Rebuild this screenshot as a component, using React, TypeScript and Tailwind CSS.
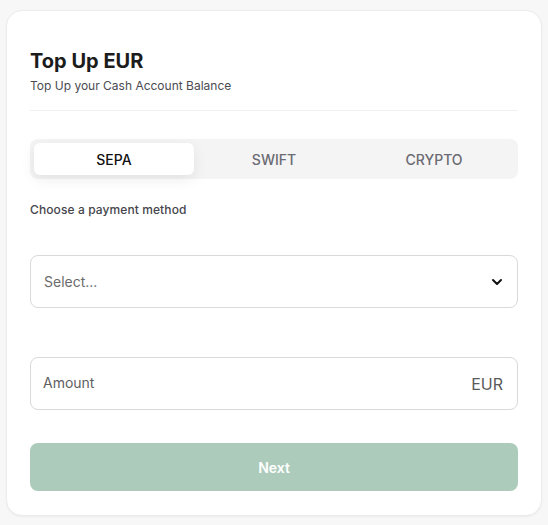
import React, { useState } from 'react';
import { ChevronDown } from 'lucide-react';

const tabs = ['SEPA', 'SWIFT', 'CRYPTO'];

export default function App() {
  const [active, setActive] = useState('SEPA');

  return (
    <div className="min-h-screen bg-[#f7f7f7] px-[6px] pt-[10px] pb-[10px] font-['Inter',sans-serif]">
      <div className="bg-white rounded-2xl border border-[#ececec] shadow-[0_1px_2px_rgba(0,0,0,0.05)] px-[23px] pt-[36px] pb-6">
        {/* Header */}
        <div className="pb-4 border-b border-[#f0f0f0]">
          <h1 className="text-[20px] leading-7 font-bold text-[#1c1c1c]">Top Up EUR</h1>
          <p className="text-[12px] leading-4 text-[#4b4b52] mt-[3px]">Top Up your Cash Account Balance</p>
        </div>

        {/* Method tabs */}
        <div className="mt-7 grid grid-cols-3 p-1 bg-[#f4f4f4] rounded-lg">
          {tabs.map((t) => (
            <button
              key={t}
              onClick={() => setActive(t)}
              className={`h-8 rounded-md text-[14px] font-medium ${
                active === t
                  ? 'bg-white text-[#111] shadow-[0_4px_14px_rgba(0,0,0,0.08)]'
                  : 'text-[#6b6b73]'
              }`}
            >
              {t}
            </button>
          ))}
        </div>

        <p className="mt-[23px] text-[12px] leading-4 font-medium text-[#45454c] tracking-[0.1px]">Choose a payment method</p>

        {/* Select */}
        <div className="mt-[37px] h-[53px] rounded-lg border border-[#d9d9d9] flex items-center justify-between pl-[13px] pr-[12px]">
          <span className="text-[14px] text-[#6b6b6b]">Select...</span>
          <ChevronDown className="w-4 h-4 text-[#111]" strokeWidth={3} />
        </div>

        {/* Amount */}
        <div className="mt-[49px] h-[53px] rounded-lg border border-[#d9d9d9] flex items-center justify-between pl-[12px] pr-[14px]">
          <span className="text-[14px] text-[#5f5f5f] -mt-[2px]">Amount</span>
          <span className="text-[16px] text-[#5a5a5a] mt-[1px]">EUR</span>
        </div>

        <button className="mt-[33px] w-full h-12 rounded-lg bg-[#adcbbb] text-white text-[14px] font-semibold">
          Next
        </button>
      </div>
    </div>
  );
}
